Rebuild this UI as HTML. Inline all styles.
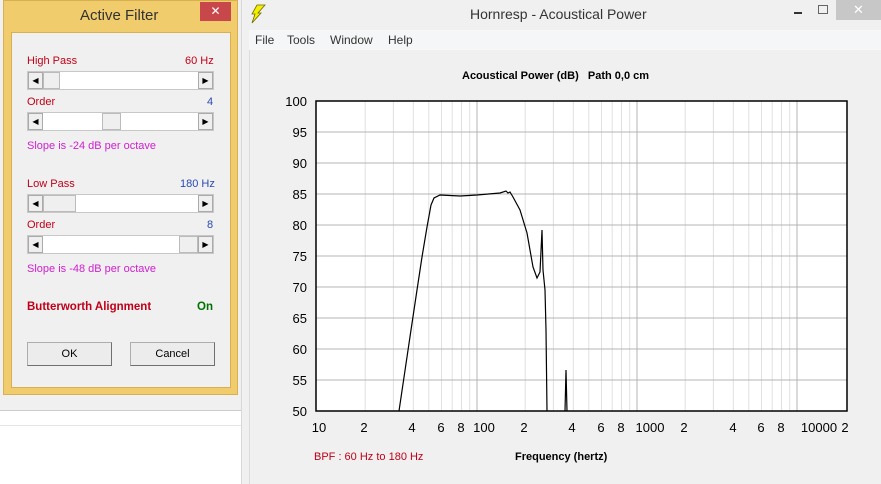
<!DOCTYPE html>
<html><head><meta charset="utf-8"><style>
*{margin:0;padding:0;box-sizing:border-box}
body{width:881px;height:484px;overflow:hidden;background:#fff;font-family:"Liberation Sans",sans-serif;position:relative}
.abs{position:absolute}
.sb{position:absolute;left:27px;width:187px;height:19px;background:#fff;border:1px solid #c8c8c8}
.sb .b{position:absolute;top:0;width:15px;height:17px;background:#efefef;border:1px solid #aaa;font-size:8px;line-height:15px;text-align:center}
.sb .t{position:absolute;top:0;height:17px;background:#efefef;border:1px solid #bbb}
.lbl{position:absolute;font-size:11px;color:#c00018}
.val{position:absolute;font-size:11px;right:0}
.btn{position:absolute;top:342px;width:85px;height:24px;background:#ececec;border:1px solid #adadad;border-right-color:#707070;border-bottom-color:#707070;font-size:11px;text-align:center;line-height:22px}
</style></head><body>
<!-- left background app -->
<div class="abs" style="left:0;top:0;width:241px;height:484px;background:#f0f0f0"></div>
<div class="abs" style="left:0;top:410px;width:241px;height:74px;background:#fff;border-top:1px solid #ccc"></div>
<div class="abs" style="left:0;top:425px;width:241px;height:1px;background:#e6e6e6"></div>
<!-- main window -->
<div class="abs" style="left:241px;top:0;width:640px;height:484px;background:#f0f0f0;border-left:1px solid #d8d8d8"></div>
<div class="abs" style="left:249px;top:30px;width:632px;height:454px;background:#f0f0f0;border-left:1px solid #dcdcdc"></div>
<div class="abs" style="left:249px;top:30px;width:632px;height:20px;background:#f5f6f7;font-size:12px;color:#333;line-height:20px">
<span style="position:absolute;left:6px">File</span><span style="position:absolute;left:38px">Tools</span><span style="position:absolute;left:81px">Window</span><span style="position:absolute;left:139px">Help</span></div>
<svg class="abs" style="left:250px;top:4px" width="16" height="20"><polygon points="7,1 15,1 8,9 11,9 2,19 5,10 2,10" fill="#f4f000" stroke="#6a6a00" stroke-width="0.8"/></svg>
<div class="abs" style="left:470px;top:6px;font-size:14px;color:#333">Hornresp - Acoustical Power</div>
<div class="abs" style="left:794px;top:12px;width:8px;height:2px;background:#333"></div>
<div class="abs" style="left:818px;top:5px;width:10px;height:9px;border:1px solid #666"></div>
<div class="abs" style="left:836px;top:0;width:45px;height:20px;background:#c7c7c7;color:#fff;text-align:center;font-size:13px;line-height:20px">✕</div>
<div class="abs" style="left:462px;top:70px;font-size:11px;font-weight:bold;color:#000">Acoustical Power (dB) &nbsp; Path 0,0 cm</div>
<svg class="abs" style="left:0;top:0" width="881" height="484" font-family="Liberation Sans" font-size="13" fill="#000">
<g id="grid"></g>
<rect x="316" y="101" width="531" height="310" fill="#fff"/>
<g stroke="#e0e0e0" stroke-width="1">
<line x1="365.2" y1="101" x2="365.2" y2="411"/><line x1="393.4" y1="101" x2="393.4" y2="411"/><line x1="413.3" y1="101" x2="413.3" y2="411"/><line x1="428.8" y1="101" x2="428.8" y2="411"/><line x1="441.5" y1="101" x2="441.5" y2="411"/><line x1="452.2" y1="101" x2="452.2" y2="411"/><line x1="461.5" y1="101" x2="461.5" y2="411"/><line x1="469.7" y1="101" x2="469.7" y2="411"/>
<line x1="525.2" y1="101" x2="525.2" y2="411"/><line x1="553.4" y1="101" x2="553.4" y2="411"/><line x1="573.3" y1="101" x2="573.3" y2="411"/><line x1="588.8" y1="101" x2="588.8" y2="411"/><line x1="601.5" y1="101" x2="601.5" y2="411"/><line x1="612.2" y1="101" x2="612.2" y2="411"/><line x1="621.5" y1="101" x2="621.5" y2="411"/><line x1="629.7" y1="101" x2="629.7" y2="411"/>
<line x1="685.2" y1="101" x2="685.2" y2="411"/><line x1="713.4" y1="101" x2="713.4" y2="411"/><line x1="733.3" y1="101" x2="733.3" y2="411"/><line x1="748.8" y1="101" x2="748.8" y2="411"/><line x1="761.5" y1="101" x2="761.5" y2="411"/><line x1="772.2" y1="101" x2="772.2" y2="411"/><line x1="781.5" y1="101" x2="781.5" y2="411"/><line x1="789.7" y1="101" x2="789.7" y2="411"/>
</g>
<g stroke="#b4b4b4" stroke-width="1">
<line x1="477" y1="101" x2="477" y2="411"/><line x1="637" y1="101" x2="637" y2="411"/><line x1="797" y1="101" x2="797" y2="411"/>
<line x1="316" y1="132" x2="847" y2="132"/><line x1="316" y1="163" x2="847" y2="163"/><line x1="316" y1="194" x2="847" y2="194"/><line x1="316" y1="225" x2="847" y2="225"/><line x1="316" y1="256" x2="847" y2="256"/><line x1="316" y1="287" x2="847" y2="287"/><line x1="316" y1="318" x2="847" y2="318"/><line x1="316" y1="349" x2="847" y2="349"/><line x1="316" y1="380" x2="847" y2="380"/>
</g>
<rect x="316" y="101" width="531" height="310" fill="none" stroke="#000" stroke-width="1.5"/>
<polyline fill="none" stroke="#000" stroke-width="1.2" points="399,411 411,330 417,290 422,257 427,227 431,205 434,198 440,195 460,196 477,195 500,193 506,191 508,193 510,192 513,197 520,210 527,233 533,267 537,278 540,272 542,230 543,270 545,290 546,330 547,411"/>
<polyline fill="none" stroke="#000" stroke-width="1.2" points="565,411 566,370 567,411"/>
<g text-anchor="end">
<text x="307" y="106">100</text><text x="307" y="137">95</text><text x="307" y="168">90</text><text x="307" y="199">85</text><text x="307" y="230">80</text><text x="307" y="261">75</text><text x="307" y="292">70</text><text x="307" y="323">65</text><text x="307" y="354">60</text><text x="307" y="385">55</text><text x="307" y="416">50</text>
</g>
<g text-anchor="middle">
<text x="319" y="432">10</text><text x="364" y="432">2</text><text x="412" y="432">4</text><text x="441" y="432">6</text><text x="461" y="432">8</text><text x="484" y="432">100</text>
<text x="524" y="432">2</text><text x="572" y="432">4</text><text x="601" y="432">6</text><text x="621" y="432">8</text><text x="650" y="432">1000</text>
<text x="684" y="432">2</text><text x="733" y="432">4</text><text x="761" y="432">6</text><text x="781" y="432">8</text><text x="819" y="432">10000</text><text x="845" y="432">2</text>
</g>
<text x="314" y="460" font-size="11" fill="#c00018">BPF : 60 Hz to 180 Hz</text>
<text x="515" y="460" font-size="11" font-weight="bold">Frequency (hertz)</text>
</svg>
<!-- dialog -->
<div class="abs" style="left:3px;top:0;width:235px;height:395px;background:#f0cc6c;border:1px solid #d8b050"></div>
<div class="abs" style="left:80px;top:7px;font-size:15px;color:#333">Active Filter</div>
<div class="abs" style="left:200px;top:2px;width:31px;height:19px;background:#c8474a;color:#fff;text-align:center;font-size:12px;line-height:19px">✕</div>
<div class="abs" style="left:11px;top:32px;width:220px;height:356px;background:#f0f0f0;border:1px solid #d8b050">
</div>
<div class="abs" style="left:0;top:0;width:240px;height:400px">
<div class="lbl" style="left:27px;top:55px">High Pass</div><div class="lbl" style="left:185px;top:55px">60 Hz</div>
<div class="sb" style="top:71px"><div class="b" style="left:0">◀</div><div class="t" style="left:15px;width:17px"></div><div class="b" style="right:0">▶</div></div>
<div class="lbl" style="left:27px;top:96px">Order</div><div class="lbl" style="left:207px;top:96px;color:#2a4ab0">4</div>
<div class="sb" style="top:112px"><div class="b" style="left:0">◀</div><div class="t" style="left:74px;width:19px"></div><div class="b" style="right:0">▶</div></div>
<div class="lbl" style="left:27px;top:140px;color:#d020d0">Slope is -24 dB per octave</div>
<div class="lbl" style="left:27px;top:178px">Low Pass</div><div class="lbl" style="left:180px;top:178px;color:#2a4ab0">180 Hz</div>
<div class="sb" style="top:194px"><div class="b" style="left:0">◀</div><div class="t" style="left:15px;width:33px"></div><div class="b" style="right:0">▶</div></div>
<div class="lbl" style="left:27px;top:219px">Order</div><div class="lbl" style="left:207px;top:219px;color:#2a4ab0">8</div>
<div class="sb" style="top:235px"><div class="b" style="left:0">◀</div><div class="t" style="left:151px;width:19px"></div><div class="b" style="right:0">▶</div></div>
<div class="lbl" style="left:27px;top:263px;color:#d020d0">Slope is -48 dB per octave</div>
<div class="lbl" style="left:27px;top:301px;font-weight:bold;font-size:11.5px">Butterworth Alignment</div>
<div class="lbl" style="left:197px;top:301px;font-weight:bold;color:#007000;font-size:11.5px">On</div>
<div class="btn" style="left:27px">OK</div>
<div class="btn" style="left:130px">Cancel</div>
</div>
</body></html>
